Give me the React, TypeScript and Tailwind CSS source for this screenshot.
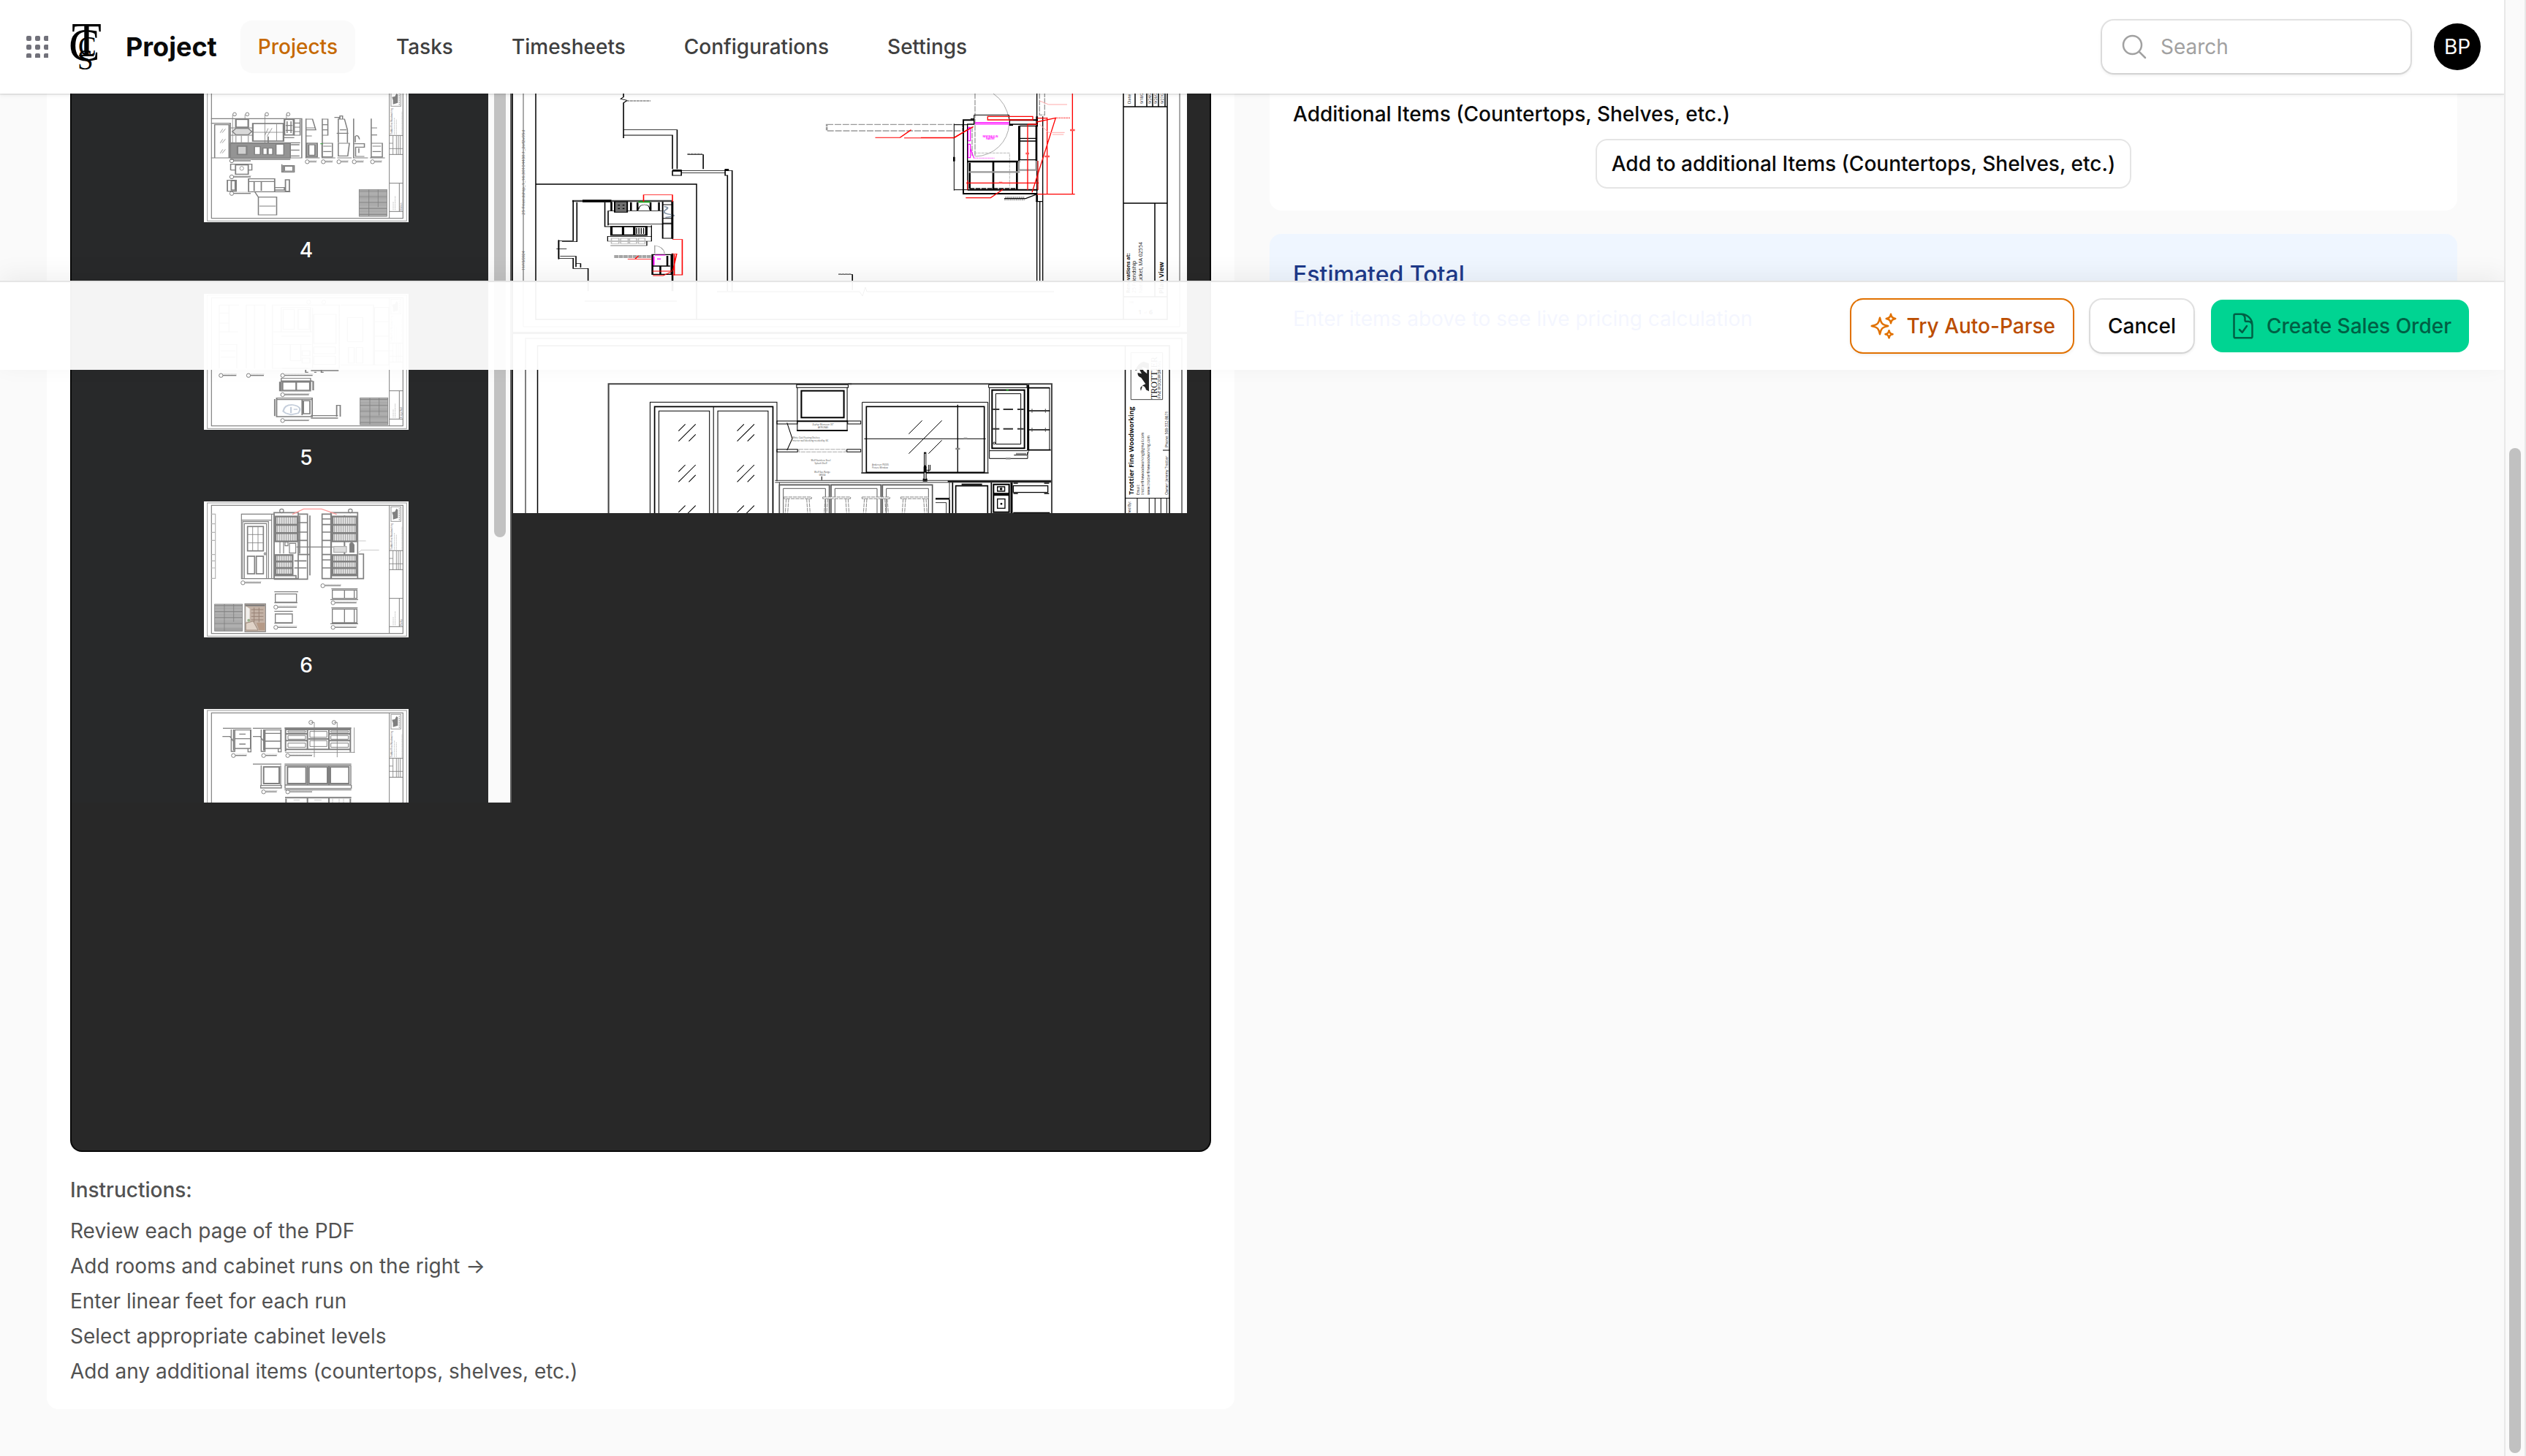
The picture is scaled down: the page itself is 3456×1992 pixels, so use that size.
import React from "react";
import {
  HiOutlineDocumentCheck,
  HiOutlineMagnifyingGlass,
  HiOutlineSparkles,
} from "react-icons/hi2";

const NAV = ["Projects", "Tasks", "Timesheets", "Configurations", "Settings"];

const STEPS = [
  "Review each page of the PDF",
  "Add rooms and cabinet runs on the right →",
  "Enter linear feet for each run",
  "Select appropriate cabinet levels",
  "Add any additional items (countertops, shelves, etc.)",
];

function range(n: number) {
  return Array.from({ length: n }, (_, i) => i);
}

/* ---------- Brand ---------- */

function Monogram() {
  return (
    <svg viewBox="94 30 48 68" className="h-[68px] w-12 overflow-visible" aria-hidden="true">
      <g fontFamily="Liberation Serif, serif" fontWeight="400" fill="#000">
        <text x="98" y="77" fontSize="67">T</text>
        <text x="94" y="83" fontSize="64">C</text>
        <text x="107" y="76" fontSize="37">C</text>
        <text x="106" y="95" fontSize="39">S</text>
      </g>
    </svg>
  );
}

function AppsGlyph() {
  return (
    <svg viewBox="0 0 30 30" className="size-[30px]" aria-hidden="true">
      {range(9).map((i) => (
        <rect key={i} x={(i % 3) * 12} y={Math.floor(i / 3) * 12} width="7" height="7" rx="2" fill="#71717a" />
      ))}
    </svg>
  );
}

/* ---------- Thumbnails ---------- */

function Schedule({ x, y }: { x: number; y: number }) {
  return (
    <g stroke="#808080" strokeWidth="2.5" fill="none">
      <rect x={x} y={y} width="114" height="110" fill="#c4c4c4" />
      {range(18).map((i) => (
        <path key={i} d={`M${x} ${y + 6 + i * 6}h114`} strokeWidth={i % 4 === 0 ? 4 : 2} />
      ))}
      <path d={`M${x + 40} ${y}v110M${x + 78} ${y}v72`} />
    </g>
  );
}

function Bubble({ x, y, w }: { x: number; y: number; w: number }) {
  return (
    <g stroke="#808080" fill="none">
      <circle cx={x} cy={y} r="8" strokeWidth="3" />
      <path d={`M${x + 8} ${y}h${w}`} strokeWidth="4" />
      <path d={`M${x + 10} ${y - 5}h${w}`} strokeWidth="3" stroke="#c4c4c4" strokeDasharray="5 1" />
    </g>
  );
}

function Sheet({ view, children }: { view: string; children: React.ReactNode }) {
  return (
    <svg viewBox="0 0 840 558" className="block h-auto w-full bg-white" aria-hidden="true">
      <g fill="none" stroke="#808080" strokeWidth="3">
        <rect x="14" y="6" width="818" height="547" stroke="#9a9a9a" />
        <rect x="31" y="16" width="786" height="526" strokeWidth="3.5" />
        <path d="M761 16V542M761 202H817M761 280H817M761 398H817M761 514H817M802 398V514" />
        <path d="M776 202V280M790 202V280M798 202V280M806 202V280M761 234H776M761 256H817" strokeWidth="2.5" />
        <rect x="768" y="22" width="40" height="60" stroke="#9a9a9a" />
        <path d="M776 74v-16l-4-14 12-2 6-12 6 4v34z" fill="#808080" stroke="none" />
        <path d="M802 78V28" stroke="#b5b5b5" strokeWidth="4" strokeDasharray="7 2" />
        <path d="M782 198V130M790 198V136M813 198V104M777 508V474M785 508V450" stroke="#c4c4c4" strokeDasharray="5 2" />
      </g>
      <g fontFamily="Lato, sans-serif" fill="#808080">
        <text transform="translate(773 198) rotate(-90)" fontSize="9" fontWeight="700">Trottier Fine Woodworking</text>
        <text transform="translate(812 510) rotate(-90)" fontSize="9" fontWeight="700">{view}</text>
      </g>
      {children}
    </svg>
  );
}

function SheetFour() {
  return (
    <Sheet view="Kitchen">
      <g transform="translate(-837 -354) scale(1.339 1)" fill="none" stroke="#808080" strokeWidth="3.5">
        <path d="M647 487H925V648H647M647 506H706V648M658 648V512H702V648M706 525H775M706 555H775M706 586H920" />
        <path d="M713 586V470M751 487V470M812 586V470M878 487V470" strokeWidth="2" />
        <path d="M675 545l8-16M681 545l10-16M675 587l8-16M681 587l10-16M675 629l8-16M681 629l10-16M812 555l10-28M818 560l16-34" strokeWidth="2" />
        <rect x="723" y="490" width="38" height="32" strokeWidth="5" />
        <path d="M723 527L712 540L723 553H761L772 540L761 527Z" fill="#d9d9d9" />
        <path d="M723 556V586M761 556V586M740 556V586" stroke="#b0b0b0" />
        <rect x="775" y="507" width="94" height="72" strokeWidth="5" />
        <path d="M775 543H869M848 510V579" strokeWidth="2" />
        <path d="M822 586V560" strokeWidth="4" />
        <rect x="872" y="490" width="28" height="64" strokeWidth="5" />
        <path d="M880 498V546M892 498V546M876 515H896M876 535H896M902 490V555H920V490M902 505H920M902 522H920M902 540H920M870 565H902" />
        <rect x="706" y="588" width="184" height="60" fill="#949494" />
        <rect x="728" y="600" width="28" height="34" fill="#d0d0d0" strokeWidth="5" />
        <rect x="780" y="602" width="18" height="32" fill="#fff" />
        <rect x="806" y="608" width="13" height="26" fill="#fff" />
        <rect x="822" y="608" width="14" height="26" fill="#fff" />
        <rect x="846" y="592" width="24" height="44" fill="#fff" />
        <path d="M892 594H918M892 616H918M892 640H918M706 654H890" strokeWidth="4" />
        <path d="M938 487V648M938 489H958L968 533H938M938 525H966M936 558H956M1025 482H1040V487M988 487V648M988 489H1005V555H988M988 512H1005M988 533H1005M1037 487V586M1037 489H1056L1065 533V586M1042 489V476H1050V489M1042 533H1062M1032 547H1068" />
        <path d="M940 588H972V644H940ZM946 594H966V638H946Z" strokeWidth="5" />
        <path d="M987 588H1019V644H987ZM991 600H1016M991 622H1016M1037 588H1071L1066 640H1037ZM1084 487V648M1089 584V560Q1098 550 1102 572M1086 590H1117V604H1090V642H1117M1100 608V628M1138 487V648M1138 525H1156M1138 554H1156M1138 588H1172V644H1138ZM1142 600H1168M1142 622H1168M936 648H980M986 648H1028M1034 648H1078M1082 648H1128M1134 648H1180" />
        <path d="M982 590H990" stroke="#4caf50" />
        <rect x="722" y="677" width="39" height="38" strokeWidth="4" />
        <ellipse cx="741" cy="691" rx="6" ry="8" strokeWidth="2" />
        <path d="M707 698V674H772V698H761M707 698H722M864 674V706H902V680H868V706M872 682H898V702H872Z" />
        <path d="M697 740H724V785H697ZM709 742H721V780H709ZM762 734H842V787H762ZM762 745H842M779 745V783M801 745V783M842 770H872V780H842M875 738H887V785H875ZM762 787H890" strokeWidth="4" />
        <path d="M780 785L792 809M792 809H848V882H792ZM795 846H845" />
      </g>
      <Bubble x={114} y={306} w={70} />
      <Bubble x={114} y={372} w={70} />
      <Bubble x={114} y={440} w={70} />
      {[424, 490, 554, 617, 692].map((x) => (
        <Bubble key={x} x={x} y={310} w={30} />
      ))}
      {[126, 178, 258, 346].map((x) => (
        <circle key={x} cx={x} cy="115" r="7" fill="none" stroke="#808080" strokeWidth="3" />
      ))}
      <Schedule x={637} y={424} />
    </Sheet>
  );
}

function SheetFive() {
  return (
    <Sheet view="Fridge Wall">
      <g transform="translate(-837 -66) scale(1.339 1)" fill="none" stroke="#808080" strokeWidth="3">
        <path d="M672 112H733M672 112V372M672 222H730M672 274H726V372M702 112V222M672 145H702M672 186H702M677 300H722M677 326H722M755 112H815M755 112V372M812 112V372M780 112V372M835 112H1040V372H835ZM862 122V222H952V122ZM868 130H902V212H868ZM914 130H948V212H914ZM835 222H960M835 274H955M862 240H952M958 122V372M962 150H1030V270H962ZM962 284H1028V312H962ZM962 322H1028V356H962ZM1045 112H1145V358H1045M1065 163H1112V262H1065ZM1068 286H1086V350H1068ZM1092 286H1112V350H1092ZM1148 122V358H1192V122ZM1148 180H1192M1148 240H1192M1148 300H1192M890 275V340H922V275M926 300H950V320H926ZM926 330H950V350H926Z" />
        <path d="M865 372H945M953 381H1038M937 378V388H945M963 388H970M985 378V388H992" strokeWidth="4" />
        <rect x="862" y="413" width="90" height="52" />
        <path d="M862 424H958M908 424V462M858 427V466M866 428H950V462H866ZM960 424V462" strokeWidth="5" />
        <path d="M842 498V568M848 494H957V570H848ZM848 500H957M926 502V564M930 505H950V558H930ZM953 566H1036M953 576H1036M1032 570V524H1043V570M850 570H886" strokeWidth="4" />
        <path d="M868 548Q872 520 898 522Q930 530 914 556L892 562L876 556ZM892 530V556M900 540H912" stroke="#c5cedb" strokeWidth="5" />
      </g>
      <Bubble x={70} y={335} w={55} />
      <Bubble x={183} y={335} w={55} />
      <Bubble x={323} y={335} w={115} />
      <Bubble x={323} y={414} w={100} />
      <Bubble x={323} y={520} w={100} />
      <circle cx="430" cy="34" r="8" fill="none" stroke="#808080" strokeWidth="3" />
      <circle cx="492" cy="34" r="8" fill="none" stroke="#808080" strokeWidth="3" />
      <Schedule x={641} y={427} />
    </Sheet>
  );
}

function Shelving({ x, y, w, h, rows }: { x: number; y: number; w: number; h: number; rows: number }) {
  return (
    <g fill="none" stroke="#808080">
      <rect x={x} y={y} width={w} height={h} strokeWidth="7" fill="#e4e4e4" />
      {range(Math.floor(w / 9)).map((i) => (
        <path key={i} d={`M${x + 8 + i * 9} ${y}v${h}`} strokeWidth="2" />
      ))}
      {range(rows - 1).map((i) => (
        <path key={i} d={`M${x} ${y + ((i + 1) * h) / rows}h${w}`} strokeWidth="8" />
      ))}
    </g>
  );
}

function SheetSix() {
  return (
    <Sheet view="Pantry">
      <g transform="translate(-87 -78)" fill="none" stroke="#808080" strokeWidth="3.5">
        <path d="M118 130H134V394H118M118 170H134M118 205H134M118 238H134M118 296H134M118 322H134M118 351H134" stroke="#b5b5b5" />
        <path d="M241 130H375V395H241ZM365 130V395M246 395V161H352V395M253 395V169H344V395M241 155H365" />
        <rect x="266" y="181" width="65" height="100" strokeWidth="5" />
        <path d="M287 181V281M309 181V281M266 214H331M266 248H331" strokeWidth="2.5" />
        <rect x="266" y="303" width="29" height="72" strokeWidth="5" />
        <rect x="302" y="303" width="29" height="72" strokeWidth="5" />
        <circle cx="338" cy="293" r="4" />
        <path d="M375 124H474V395H375ZM474 130H512V397H375M522 136V382M480 136V292M474 165H512M474 204H512M474 238H512M474 296H522M458 322H508M458 351H508M375 383H465V400" strokeWidth="5" />
        <path d="M399 240V292M414 240V292M438 250H464V290H438ZM420 245H432V260H420ZM467 265H617" />
        <path d="M572 130H610V395H572ZM572 150H610M572 173H610M572 204H610M572 238H610M572 296H610M572 318H610M572 351H610M608 124H718V395H608ZM722 294H742V395H720M608 383H718" strokeWidth="5" />
        <path d="M664 136V380" strokeWidth="6" />
        <rect x="620" y="263" width="52" height="24" fill="#ddd" stroke="#aaa" />
        <path d="M686 252Q694 240 703 256V286H686Z" fill="#808080" />
        <path d="M706 240H752M720 290L732 278H806" stroke="#b0b0b0" strokeWidth="2" />
        <path d="M450 131L496 109H570L632 131" stroke="#ff9a9a" strokeWidth="4" />
        <circle cx="406" cy="117" r="8" />
        <circle cx="688" cy="117" r="8" />
        <path d="M376 449H474M380 458H467V492H380ZM376 494H471M376 529H452M380 540H450V576H380ZM376 578H452" strokeWidth="4" />
        <path d="M610 437H718M614 442H715V476H614ZM606 481H720M664 442V476M610 515H718M614 520H715V576H614ZM606 580H720M664 520V576M704 440V476M704 520V576" strokeWidth="4" />
      </g>
      <Shelving x={294} y={62} w={90} h={102} rows={3} />
      <Shelving x={294} y={220} w={70} h={80} rows={3} />
      <Shelving x={528} y={62} w={98} h={102} rows={3} />
      <Shelving x={528} y={220} w={98} h={80} rows={3} />
      <Bubble x={160} y={334} w={66} />
      <Bubble x={488} y={346} w={66} />
      <Bubble x={295} y={434} w={78} />
      <Bubble x={295} y={517} w={78} />
      <Bubble x={530} y={416} w={88} />
      <Bubble x={530} y={517} w={88} />
      <Schedule x={44} y={422} />
      <g>
        <rect x="168" y="420" width="85" height="115" fill="#c3b2a6" stroke="#808080" strokeWidth="3" />
        <path d="M172 430l16 10v54h-16z" fill="#f1efec" />
        <path d="M194 444h50M194 458h50M194 472h50M194 486h50M206 436v60M226 436v60" stroke="#988376" strokeWidth="3" />
        <path d="M172 500l30-8 20 36h-50z" fill="#e0d3c8" stroke="#8a7567" strokeWidth="2" />
        <path d="M216 498h34v30h-24z" fill="#b59a87" />
        <path d="M170 424h80v6h-80z" fill="#777" />
        <circle cx="184" cy="488" r="6" fill="#9bb08d" />
      </g>
    </Sheet>
  );
}

function SheetSeven() {
  return (
    <Sheet view="Island">
      <g transform="translate(-87 -930)" fill="none" stroke="#808080" strokeWidth="4">
        <path d="M165 1009H281M199 1014V1104H214V1014M214 1016H278V1092H214M214 1052H278M268 1092V1106H280V1014M163 1043H194L208 1062M232 1033H258M232 1074H258" />
        <path d="M288 1009H405M322 1014V1104H338V1014M338 1016H402V1092H338M338 1030H402M338 1062H402M392 1092V1106H404V1014M288 1043H318L332 1062" />
        <rect x="206" y="1014" width="6" height="86" fill="#808080" stroke="none" />
        <rect x="330" y="1014" width="6" height="86" fill="#808080" stroke="none" />
        <path d="M418 1009H692M422 1014H688V1096H422ZM422 1104V1096M688 1096V1106M512 1014V1096M600 1014V1096M422 1032H512M600 1032H688M422 1060H512M600 1060H688M516 1053H600" strokeWidth="6" />
        <path d="M432 1039H504V1054H432ZM432 1070H504V1087H432ZM522 1022H592V1046H522ZM522 1060H592V1084H522ZM608 1039H680V1054H608ZM608 1070H680V1087H608ZM432 1020H504V1026H432ZM608 1020H680V1026H608Z" strokeWidth="3" />
        <path d="M540 1128V985H526M634 1128V985H620M704 1006V1110M420 1108H706" strokeWidth="2.5" />
        <circle cx="526" cy="985" r="8" strokeWidth="3" />
        <circle cx="621" cy="985" r="8" strokeWidth="3" />
        <path d="M288 1156H405M322 1162V1244H402V1162M320 1254H405V1244H320ZM418 1156H692M420 1162H690V1242H420ZM420 1242V1256H692V1242M418 1262H692" />
        <path d="M332 1168H396V1236H332ZM430 1168H506V1236H430ZM518 1168H594V1236H518ZM606 1168H682V1236H606Z" strokeWidth="6" />
        <path d="M512 1162V1242M600 1162V1242M420 1294H692M424 1298V1330M512 1296V1330M600 1296V1330M688 1298V1330" strokeWidth="6" />
        <path d="M455 1304H480M540 1304H570M615 1298V1320M642 1298V1320M660 1298V1320" strokeWidth="2" stroke="#b0b0b0" />
      </g>
      <Bubble x={121} y={191} w={46} />
      <Bubble x={245} y={191} w={46} />
      <Bubble x={344} y={191} w={92} />
      <Bubble x={245} y={340} w={46} />
      <Bubble x={344} y={340} w={92} />
    </Sheet>
  );
}

/* ---------- Full-size pages ---------- */

function PlanPage() {
  return (
    <svg viewBox="702 128 922 326" className="block h-auto w-full bg-white" role="img" aria-label="Plan view drawing">
      <g fill="none" stroke="#000" strokeWidth="2">
        <path d="M716 120V447H1614V120" stroke="#555" strokeWidth="1" />
        <path d="M733 120V437H1597V120M1537 120V437M1537 146H1597M1537 278H1597M1580 278V406M1537 406H1597" strokeWidth="1.5" />
        <path d="M1553 128V146M1569 128V146M1577 128V146M1585 128V146M1594 128V146M733 252H953V437" strokeWidth="1.5" />
        <path d="M981 399H1176l4 6 4-12 2 6H1442" strokeWidth="1" />
        <path d="M800 412H926" strokeWidth="1" />
      </g>
      <g transform="translate(700 0) scale(0.6378 0.3333)" fill="none" stroke="#000" strokeWidth="2.5">
        <path d="M240 380V398L234 406L248 412L240 422V567M240 533H355V694M240 555H345V694M345 700V720H364V697M364 700H460M364 709H458M458 694V720H463V1195M473 1195V700H460M411 694V635H377M731 1190V1127H701" />
        <path d="M345 700H364M458 697H466" strokeWidth="8" />
        <path d="M377 631H409M247 414H298M701 1125H728" stroke="#888" strokeWidth="4" strokeDasharray="6 1" />
        <path d="M676 511H968V537H676Z" stroke="#999" strokeWidth="4" strokeDasharray="14 3" />
        <path d="M780 565H833L857 533M842 566H949L986 523" stroke="#f00" strokeWidth="3" />
        <path d="M130 825H345" stroke="#444" strokeWidth="8" />
        <path d="M152 825H214" strokeWidth="11" />
        <path d="M132 822V988H101V1060H132V1102H164V1195M140 830V992H108M104 1052H138V1096" strokeWidth="2.5" />
        <path d="M101 985V1064M96 1021H118M148 1098V1082H138M200 830V930H300M207 925V866H320M214 828V866H322" />
        <path d="M214 830V864M256 830V864M270 830V864M298 830V864M316 830V864" strokeWidth="4" />
        <rect x="221" y="828" width="27" height="43" fill="#707070" strokeWidth="3" />
        <path d="M228 842h4M238 842h4M228 856h4M238 856h4" strokeWidth="4" />
        <path d="M272 829H297" stroke="#22a822" strokeWidth="6" />
        <path d="M272 860Q274 840 285 840Q296 840 296 860" strokeWidth="2" />
        <path d="M324 828V978H344V828M324 840H344M324 896H344M324 916H344" strokeWidth="3" />
        <path d="M327 848Q340 850 330 862T340 880T330 892" stroke="#8596a8" strokeWidth="4" />
        <path d="M214 930H289V965H214ZM239 930V965M263 930V965" strokeWidth="5" />
        <path d="M268 935V960M273 935V960M278 935V960M283 935V960M207 920H345M300 925V990H206V970H300M212 1008H290V990" strokeWidth="2" />
        <path d="M214 978H230V1000H214ZM234 978H250V1000H234ZM253 978H268V1000H253ZM272 978H286V1000H272Z" stroke="#bbb" />
        <path d="M345 825V980M345 1040V1195" strokeWidth="4" />
        <path d="M307 1040V1008Q326 1012 328 1040" stroke="#999" strokeWidth="2" />
        <path d="M220 1050H300M220 1056H300" stroke="#888" strokeWidth="5" strokeDasharray="9 1" />
        <path d="M302 1045H343V1126H302ZM302 1092H340M319 1092V1124M334 1050V1092" strokeWidth="4" />
        <path d="M283 828V800H345V828M249 1063H265L272 1050M265 1063H300M345 983H366V1128H345M302 1113H345M303 1131H325L340 1118M349 1045V1130M345 1042H354L346 1110" stroke="#f00" strokeWidth="2.5" />
        <path d="M307 1047H330M305 1052V1088" stroke="#f0f" strokeWidth="3" />
        <path d="M312 1063H320" stroke="#f0f" strokeWidth="4" />
      </g>
      <g transform="translate(1260 120) scale(0.3333)" fill="none" stroke="#000" strokeWidth="4">
        <path d="M222 24V285M210 160V280M487 24V112H508V24" stroke="#999" strokeDasharray="22 4" />
        <path d="M297 24Q352 62 362 133M362 150A142 138 0 0 1 224 282" stroke="#999" strokeWidth="2.5" />
        <path d="M218 268H364V410" stroke="#aaa" strokeWidth="2.5" strokeDasharray="12 3" />
        <path d="M218 133H174V435H478M364 133H480M191 419H480" strokeWidth="6" />
        <path d="M191 419V150H218V128H204M364 128V154H378M364 150H480M476 24V133M476 150V467M500 118V792M488 467V792M476 467V792M472 467H500V435" />
        <path d="M218 112H362V128M218 112V128M136 148V422M136 152H191M136 419H191" strokeWidth="3" />
        <path d="M136 284V302" strokeWidth="8" />
        <path d="M476 118V160M476 440V467" strokeWidth="8" />
        <path d="M406 157H473V296H406ZM406 208H473M406 219H473" />
        <path d="M402 157V305M473 157V300" strokeWidth="6" />
        <path d="M191 303H406" strokeWidth="8" />
        <path d="M200 308V414M297 305V419M394 305V419" strokeWidth="8" />
        <path d="M200 414H396" strokeWidth="5" strokeDasharray="20 4" />
        <path d="M195 346H406M402 300V338H473V300" stroke="#999" strokeWidth="7" />
        <path d="M222 143H362M222 149H362M194 163H203V218H194ZM194 232H203V287H194ZM203 250L218 290" stroke="#f0f" strokeWidth="3.5" />
        <path d="M220 289H302" stroke="#f8f" strokeWidth="4" strokeDasharray="6 2" />
        <path d="M622 24V437M474 437H632M518 122V437M478 125H518M274 118H459V132H274ZM438 150V420M438 150H478M186 391H484M474 141L553 124L456 430M184 452H286L336 418M0 205H135L215 160" stroke="#f00" />
        <path d="M480 300V420M191 380V419" stroke="#c00" />
        <path d="M612 174H632M508 282H528M430 270H444M320 390H334" stroke="#f55" strokeWidth="7" />
        <path d="M555 124H612" stroke="#f88" strokeWidth="5" strokeDasharray="8 2" />
        <path d="M487 54L524 69H600M487 150L524 184H590M540 192H586" stroke="#faa" strokeWidth="3" />
        <path d="M342 455H430L478 436" />
        <path d="M346 450H424M342 460H426" stroke="#888" strokeDasharray="6 2" />
      </g>
      <g fontFamily="Open Sans, sans-serif" fill="#111">
        <text x="1355" y="188" fontSize="3" fontWeight="700" fill="#f0f" textAnchor="middle">NEW WALK-IN</text>
        <text x="1355" y="191" fontSize="3" fontWeight="700" fill="#f0f" textAnchor="middle">PANTRY</text>
        <text transform="translate(1546 401) rotate(-90)" fontSize="7" fontWeight="700">Renovations at:</text>
        <text transform="translate(1554 401) rotate(-90)" fontSize="7">25 Friendship</text>
        <text transform="translate(1563 401) rotate(-90)" fontSize="7">Nantucket, MA 02554</text>
        <text transform="translate(1592 402) rotate(-90)" fontSize="9" fontWeight="700">Plan View</text>
        <text transform="translate(1547 142) rotate(-90)" fontSize="6">Date</text>
        <text transform="translate(1564 142) rotate(-90)" fontSize="5">9/18/25</text>
        <text transform="translate(1575 142) rotate(-90)" fontSize="5">9/24/25</text>
        <text transform="translate(1583 142) rotate(-90)" fontSize="5">9/26/25</text>
        <text transform="translate(1592 142) rotate(-90)" fontSize="5">9/27/25</text>
        <text x="1544" y="415" fontSize="4">108</text>
        <text x="1557" y="430" fontSize="9" fontWeight="700">1</text>
        <text x="1565" y="429" fontSize="4">of</text>
        <text x="1572" y="430" fontSize="9" fontWeight="700">6</text>
        <text transform="translate(718 294) rotate(-90)" fontSize="6" fill="#666">25 Friendship_1_16.30104430.1_2of2v05d</text>
        <text transform="translate(718 370) rotate(-90)" fontSize="5" fill="#666">11/15/2024</text>
      </g>
    </svg>
  );
}

function ElevationPage() {
  const glass = range(6).map((i) => ({ x: (i % 2) * 233, y: Math.floor(i / 2) * 167 }));
  return (
    <svg viewBox="702 457 922 245" className="block h-auto w-full bg-white" role="img" aria-label="Kitchen elevation drawing">
      <g fill="none" stroke="#000">
        <path d="M719 702V463H1617V702" stroke="#555" strokeWidth="1.5" />
        <path d="M735.500 702V473H1600V702M1539.500 473V702" strokeWidth="1.5" />
      </g>
      <g transform="translate(690 370) scale(0.3444 0.3333)" fill="none" stroke="#000" strokeWidth="3">
        <path d="M414 996V466H1380" stroke="#444" strokeWidth="6" />
        <path d="M579 996V541H1083V865M614 996V577H815V996M848 996V577H1048V996M831 559V996" />
        <path d="M597 996V559H1067V996" strokeWidth="5" />
        {glass.map(({ x, y }) => (
          <path key={`${x}-${y}`} d={`M${692 + x} ${701 + y}l68 -70M${692 + x} ${659 + y}l27 -28M${733 + x} ${701 + y}l27 -28`} />
        ))}
        <path d="M1161 469H1366V481H1161ZM1164 481V657M1362 481V657" />
        <rect x="1180" y="494" width="169" height="110" strokeWidth="6" />
        <path d="M1164 619H1364M1162 657H1364" strokeWidth="6" />
        <path d="M1083 618H1164V630H1083ZM1364 618H1416V630H1364ZM1083 734H1165V745H1083ZM1361 734H1416V745H1361ZM1123 625L1144 690L1123 738M1261 860V845" />
        <path d="M1170 734H1356V745H1170Z" stroke="#aaa" strokeDasharray="18 3" />
      </g>
      <g transform="translate(1160 370) scale(0.3333)" fill="none" stroke="#000" strokeWidth="3">
        <path d="M0 466H837V996" stroke="#444" strokeWidth="6" />
        <path d="M59 828V541H575V828M67 691H566M250 671L305 616M250 752L386 616M331 752L386 697" />
        <rect x="76" y="559" width="484" height="270" strokeWidth="5" />
        <path d="M55 831H578M451 551V831" strokeWidth="4" />
        <path d="M317 746V810" strokeWidth="10" />
        <path d="M317 752V800" stroke="#fff" strokeWidth="4" />
        <path d="M317 805V860M308 860H326" strokeWidth="12" />
        <path d="M317 830V856" stroke="#fff" strokeWidth="5" />
        <path d="M322 820H338V798M332 798V826" />
        <path d="M578 469H735V481H578ZM581 481V740H735M607 506H710V713H607ZM581 740V772H738V745M682 758H735L742 742" />
        <rect x="592" y="491" width="133" height="239" strokeWidth="6" />
        <path d="M595 570H622M638 570H678M696 570H722M595 650H622M638 650H678M696 650H722" stroke="#333" strokeWidth="6" />
        <path d="M740 469V740" strokeWidth="9" />
        <circle cx="601" cy="709" r="4" />
        <path d="M742 482H829M742 576H829M742 654H829M742 737H833" strokeWidth="5" />
        <path d="M756 568v20M811 568v20M756 646v20M811 646v20" stroke="#444" strokeDasharray="6 4" />
        <path d="M828 482V737" />
        <path d="M650 491H660" stroke="#1fa51f" strokeWidth="5" />
        <path d="M-299 862H833V870H-299M-281 870V996M417 870V935M360 935H420M360 953H404V996" stroke="#333" />
        {[-281, -69, 142].map((x) => (
          <g key={x} stroke="#555">
            <path d={`M${x} 996V880h205V996`} strokeWidth="5" />
            <path d={`M${x + 16} 996V895h173V996`} />
          </g>
        ))}
        {[-263, -103, 58, 217].map((x) => (
          <g key={x} stroke="#888">
            <rect x={x} y="930" width="114" height="7" fill="#fff" strokeDasharray="16 3" />
            <path d={`M${x + 10} 937L${x + 6} 996M${x + 20} 937L${x + 16} 996M${x + 94} 937L${x + 98} 996M${x + 104} 937L${x + 108} 996`} strokeDasharray="16 3" />
          </g>
        ))}
        <path d="M410 866H833M430 870V996M417 940V996M360 938H417" strokeWidth="5" />
        <path d="M443 996V884H574V996M467 878H551M589 870V996" strokeWidth="5" />
        <path d="M598 878H662V916H598ZM598 922H662V992H598Z" strokeWidth="6" />
        <path d="M614 888H644V906H614ZM614 938H645V976H614Z" strokeWidth="4" />
        <circle cx="629" cy="897" r="4" fill="#000" />
        <circle cx="630" cy="958" r="3" fill="#000" />
        <path d="M672 870V996" strokeWidth="9" />
        <path d="M679 884H821V911H679ZM679 994H829M806 916H826M680 916H698M806 873H826M680 873H698" strokeWidth="4" />
        <path d="M648 772H668M442 732H460M476 690H490M690 753H732" stroke="#888" strokeWidth="7" />
        <path d="M1162 337H1292V530H1162Z" stroke="#444" />
        <path d="M1203 494Q1196 476 1212 474Q1222 478 1224 490L1236 496V382L1214 374Q1190 380 1180 412L1196 404L1206 424L1190 420Q1188 436 1204 440L1222 466L1210 472Z" fill="#222" stroke="none" />
        <path d="M1208 396L1228 402V424L1214 412Z" fill="#fff" stroke="none" />
        <path d="M1138 935H1322M1188 935V996M1237 935V996M1261 935V996M1285 935V996M1309 935V996M1293 738H1322" />
      </g>
      <g fontFamily="Open Sans, sans-serif" fill="#111">
        <text transform="translate(1551 677) rotate(-90)" fontSize="9" fontWeight="700">Trottier Fine Woodworking</text>
        <text transform="translate(1559 677) rotate(-90)" fontSize="5">Email:</text>
        <text transform="translate(1565 677) rotate(-90)" fontSize="5">trottierfinewoodworking@gmail.com</text>
        <text transform="translate(1573 677) rotate(-90)" fontSize="5">www.trottierfinewoodworking.com</text>
        <text transform="translate(1598 677) rotate(-90)" fontSize="5">Owner: Jeremy Trottier</text>
        <text transform="translate(1598 612) rotate(-90)" fontSize="5">Phone: 508-332-8671</text>
        <text transform="translate(1547 716) rotate(-90)" fontSize="5">Designed By:</text>
        <text transform="translate(1583 546) rotate(-90)" fontSize="12" fontFamily="Liberation Serif, serif">TROTTIER</text>
        <text transform="translate(1588 545) rotate(-90)" fontSize="5">FINE WOODWORKING</text>
      </g>
      <g fontFamily="Open Sans, sans-serif" fontSize="3" fill="#444">
        <text x="1126" y="582" textAnchor="middle">Zephyr Monsoon 30"</text>
        <text x="1126" y="586" textAnchor="middle">AK9528AS</text>
        <text x="1084" y="600">White Oak Floating Shelves</text>
        <text x="1084" y="604">Interior wall blocking needed by GC</text>
        <text x="1123" y="631" textAnchor="middle">Wolf Stainless Steel</text>
        <text x="1123" y="635" textAnchor="middle">Splash Shelf</text>
        <text x="1125" y="647" textAnchor="middle">Wolf Gas Range</text>
        <text x="1125" y="651" textAnchor="middle">GR304</text>
        <text x="1193" y="637">Andersen P6035</text>
        <text x="1193" y="641">Picture Window</text>
      </g>
    </svg>
  );
}

/* ---------- Page sections ---------- */

function Header() {
  return (
    <header className="relative z-20 flex h-32 items-center bg-white pr-8 pl-9 shadow-[0_0_0_2px_rgba(0,0,0,0.06),0_2px_6px_rgba(0,0,0,0.08)]">
      <button type="button" aria-label="Switch app" className="mr-7">
        <AppsGlyph />
      </button>
      <a href="#home" className="flex items-center gap-[30px] text-[36px] leading-10 font-bold text-neutral-950" aria-label="Project home">
        <Monogram />
        <span>Project</span>
      </a>
      <nav className="ml-8 flex gap-8">
        {NAV.map((item, i) => (
          <a
            key={item}
            href={`#${item.toLowerCase()}`}
            className={
              i === 0
                ? "rounded-2xl bg-neutral-50 px-6 py-4 font-medium text-[#c66900]"
                : "rounded-2xl px-6 py-4 font-medium text-neutral-700"
            }
          >
            {item}
          </a>
        ))}
      </nav>
      <label className="ml-auto flex h-[72px] w-[422px] items-center gap-4 rounded-2xl px-6 shadow-[0_0_0_2px_rgba(0,0,0,0.1),0_2px_5px_rgba(0,0,0,0.12)]">
        <HiOutlineMagnifyingGlass className="size-10 shrink-0 text-neutral-400" />
        <span className="sr-only">Search</span>
        <input type="search" placeholder="Search" className="w-full min-w-0 bg-transparent outline-none placeholder:text-neutral-400" />
      </label>
      <button type="button" className="ml-8 size-16 rounded-full bg-black text-white">
        BP
      </button>
    </header>
  );
}

function Thumbnail({ page, children }: { page: number; children: React.ReactNode }) {
  return (
    <button type="button" className="block w-[280px] shrink-0 text-center font-medium text-white" aria-label={`Page ${page}`}>
      {children}
      <span className="mb-[22px] block h-[76px] leading-[76px]">{page}</span>
    </button>
  );
}

function PdfViewer() {
  return (
    <div className="flex h-[1448px] items-start overflow-hidden rounded-b-2xl border-x-2 border-b-2 border-neutral-950 bg-[#282828]">
      <div className="flex h-[970px] w-[570px] flex-col items-center overflow-hidden bg-[#28292a] pl-[72px]">
        <div className="-mt-[10px]">
          <Thumbnail page={4}><SheetFour /></Thumbnail>
          <Thumbnail page={5}><SheetFive /></Thumbnail>
          <Thumbnail page={6}><SheetSix /></Thumbnail>
          <Thumbnail page={7}><SheetSeven /></Thumbnail>
        </div>
      </div>
      <div className="h-[970px] w-8 border-r-2 border-[#606060] bg-[#fafafa] pl-2" aria-hidden="true">
        <div className="h-[607px] w-4 rounded-b-full bg-[#c1c1c1]" />
      </div>
      <div className="flex flex-1 flex-col gap-[3px] pr-[31px] pl-0.5">
        <PlanPage />
        <ElevationPage />
      </div>
    </div>
  );
}

function ActionBar() {
  return (
    <div className="absolute inset-x-0 top-[384px] z-10 flex items-center justify-end gap-6 border-t-2 border-neutral-200 bg-white/95 py-6 pr-12 shadow-[0_-8px_32px_rgba(0,0,0,0.06)]">
      <button type="button" className="flex h-[72px] items-center gap-3 rounded-2xl bg-white px-6 font-medium text-[#bb4d00] shadow-[0_0_0_2px_#e17100,0_2px_6px_rgba(0,0,0,0.12)]">
        <HiOutlineSparkles className="size-10 text-[#e17100]" />
        Try Auto-Parse
      </button>
      <button type="button" className="h-[72px] rounded-2xl bg-white px-6 font-medium text-neutral-950 shadow-[0_0_0_2px_rgba(0,0,0,0.1),0_2px_5px_rgba(0,0,0,0.12)]">
        Cancel
      </button>
      <button type="button" className="flex h-[72px] items-center gap-3 rounded-2xl bg-[#00d492] px-6 font-medium text-[#006045]">
        <HiOutlineDocumentCheck className="size-10" />
        Create Sales Order
      </button>
    </div>
  );
}

export default function App() {
  return (
    <div className="flex min-h-screen bg-neutral-50 font-['Inter',sans-serif] text-[28px] leading-10">
      <div className="relative min-w-0 flex-1 overflow-hidden">
        <Header />
        <ActionBar />
        <main className="grid grid-cols-2 items-start gap-12 px-16 pb-16">
          <section className="rounded-b-2xl bg-white px-8 pb-8 text-neutral-600">
            <PdfViewer />
            <h2 className="mt-8 font-medium">Instructions:</h2>
            <ul className="mt-4 flex flex-col gap-2">
              {STEPS.map((step) => (
                <li key={step}>{step}</li>
              ))}
            </ul>
          </section>
          <div className="flex flex-col gap-8">
            <section className="flex flex-col rounded-b-2xl bg-white px-8 pt-2 pb-[30px] text-neutral-950">
              <h2 className="font-medium">Additional Items (Countertops, Shelves, etc.)</h2>
              <button type="button" className="mt-[14px] h-[68px] self-center rounded-2xl border-2 border-neutral-200 px-5 font-medium">
                Add to additional Items (Countertops, Shelves, etc.)
              </button>
            </section>
            <section className="rounded-2xl bg-[#eff6ff] p-8">
              <h2 className="text-[32px] leading-[48px] font-medium text-[#1e3a8a]">Estimated Total</h2>
              <p className="mt-4 text-[#2b4fff]">Enter items above to see live pricing calculation</p>
            </section>
          </div>
        </main>
      </div>
      <div className="z-30 flex w-[30px] flex-col border-x-2 border-[#e8e8e8] bg-[#fafafa] px-[5px]" aria-hidden="true">
        <div className="mt-[613px] mb-1 flex-1 rounded-full bg-[#c1c1c1]" />
      </div>
    </div>
  );
}
